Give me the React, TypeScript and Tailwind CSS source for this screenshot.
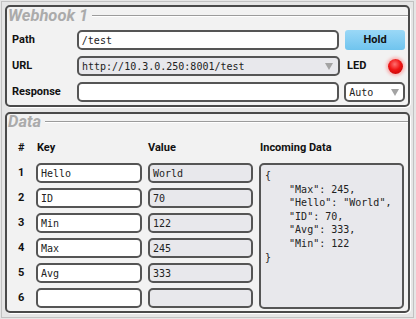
import React from "react";

const mono = { fontFamily: '"DejaVu Sans Mono", "Liberation Mono", monospace' };

const Arrow = () => (
  <svg width="8" height="7" viewBox="0 0 8 7" className="shrink-0">
    <polygon points="0,0 8,0 4,7" fill="#a3a3a3" />
  </svg>
);

const GroupTitle = ({ title }: { title: string }) => (
  <div className="flex items-center h-[15px] pl-[1px] gap-[4px]">
    <span className="text-[16.5px] leading-[16px] font-bold italic text-[#ababab]">{title}</span>
    <div className="flex-1 border-t border-t-[#9c9c9c] border-b border-b-white" />
  </div>
);

const Field = ({ value, grey }: { value: string; grey?: boolean }) => (
  <div
    className={`h-[20px] rounded-[5px] border-2 border-[#555] pl-[3px] flex items-center text-[10px] font-normal text-[#222] ${
      grey ? "bg-[#e8e8ec]" : "bg-white"
    }`}
    style={mono}
  >
    {value}
  </div>
);

const rows = [
  { key: "Hello", value: "World" },
  { key: "ID", value: "70" },
  { key: "Min", value: "122" },
  { key: "Max", value: "245" },
  { key: "Avg", value: "333" },
  { key: "", value: "" },
];

const incoming = `{
    "Max": 245,
    "Hello": "World",
    "ID": 70,
    "Avg": 333,
    "Min": 122
}`;

export default function App() {
  return (
    <div
      className="w-[416px] h-[319px] bg-[#e6e6e6] p-[1px]"
      style={{ fontFamily: 'Roboto, "Liberation Sans", sans-serif' }}
    >
      <div className="h-[317px] w-[413px] border border-[#c2c2c2] p-[3px] flex flex-col gap-[5px]">
        {/* webhook group */}
        <div className="h-[102px] rounded-[5px] border-2 border-[#4a4a4a] bg-[#f2f2f2] shadow-[1px_1px_0_#fff] flex flex-col">
          <div className="pt-[1px]">
            <GroupTitle title="Webhook 1" />
          </div>
          <div className="flex flex-col gap-[6px] pt-[7px] pl-[5px] pr-[3px] text-[11px] font-bold text-[#111]">
            <div className="flex items-center">
              <span className="w-[65px]">Path</span>
              <div className="w-[263px]">
                <Field value="/test" />
              </div>
              <button className="ml-[6px] w-[60px] h-[20px] rounded-[3px] bg-gradient-to-b from-[#9ad8f7] to-[#6fc4ee] text-[11px] font-bold text-[#111]">
                Hold
              </button>
            </div>
            <div className="flex items-center">
              <span className="w-[65px]">URL</span>
              <div
                className="w-[263px] h-[20px] rounded-[5px] border-2 border-[#555] bg-[#e8e8ec] pl-[3px] pr-[5px] flex items-center justify-between text-[10px] font-normal text-[#222]"
                style={mono}
              >
                <span>http://10.3.0.250:8001/test</span>
                <Arrow />
              </div>
              <span className="ml-[7px] w-[41px]">LED</span>
              <div className="w-[15px] h-[15px] rounded-full bg-[radial-gradient(circle_at_45%_35%,#ff7070_0%,#f01414_45%,#b40000_100%)] shadow-[0_0_3px_2px_rgba(255,110,110,0.45)]" />
            </div>
            <div className="flex items-center">
              <span className="w-[65px]">Response</span>
              <div className="w-[263px]">
                <Field value="" />
              </div>
              <div
                className="ml-[5px] w-[61px] h-[20px] rounded-[5px] border-2 border-[#555] bg-white pl-[3px] pr-[4px] flex items-center justify-between text-[10px] font-normal text-[#222]"
                style={mono}
              >
                <span>Auto</span>
                <Arrow />
              </div>
            </div>
          </div>
        </div>

        {/* data group */}
        <div className="h-[201px] rounded-[5px] border-2 border-[#4a4a4a] bg-[#f2f2f2] shadow-[1px_1px_0_#fff] flex flex-col">
          <GroupTitle title="Data" />
          <div className="grid grid-cols-[23px_106px_105px_145px] grid-rows-[20px_repeat(6,20px)] gap-x-[6px] gap-y-[5px] pt-[9px] text-[11px] font-bold text-[#111]">
            <span className="self-center pl-[11px]">#</span>
            <span className="self-center pl-[1px]">Key</span>
            <span className="self-center">Value</span>
            <span className="self-center pl-[1px]">Incoming Data</span>
            {rows.map((r, i) => (
              <React.Fragment key={i}>
                <span className="self-center pl-[11px]" style={{ gridRow: i + 2, gridColumn: 1 }}>
                  {i + 1}
                </span>
                <div style={{ gridRow: i + 2, gridColumn: 2 }}>
                  <Field value={r.key} />
                </div>
                <div style={{ gridRow: i + 2, gridColumn: 3 }}>
                  <Field value={r.value} grey />
                </div>
              </React.Fragment>
            ))}
            <pre
              className="col-start-4 row-start-2 row-span-6 h-[146px] rounded-[5px] border-2 border-[#555] bg-[#e8e8ec] pl-[4px] pt-[4px] text-[10px] leading-[13.6px] font-normal text-[#222] m-0"
              style={mono}
            >
              {incoming}
            </pre>
          </div>
        </div>
      </div>
    </div>
  );
}
